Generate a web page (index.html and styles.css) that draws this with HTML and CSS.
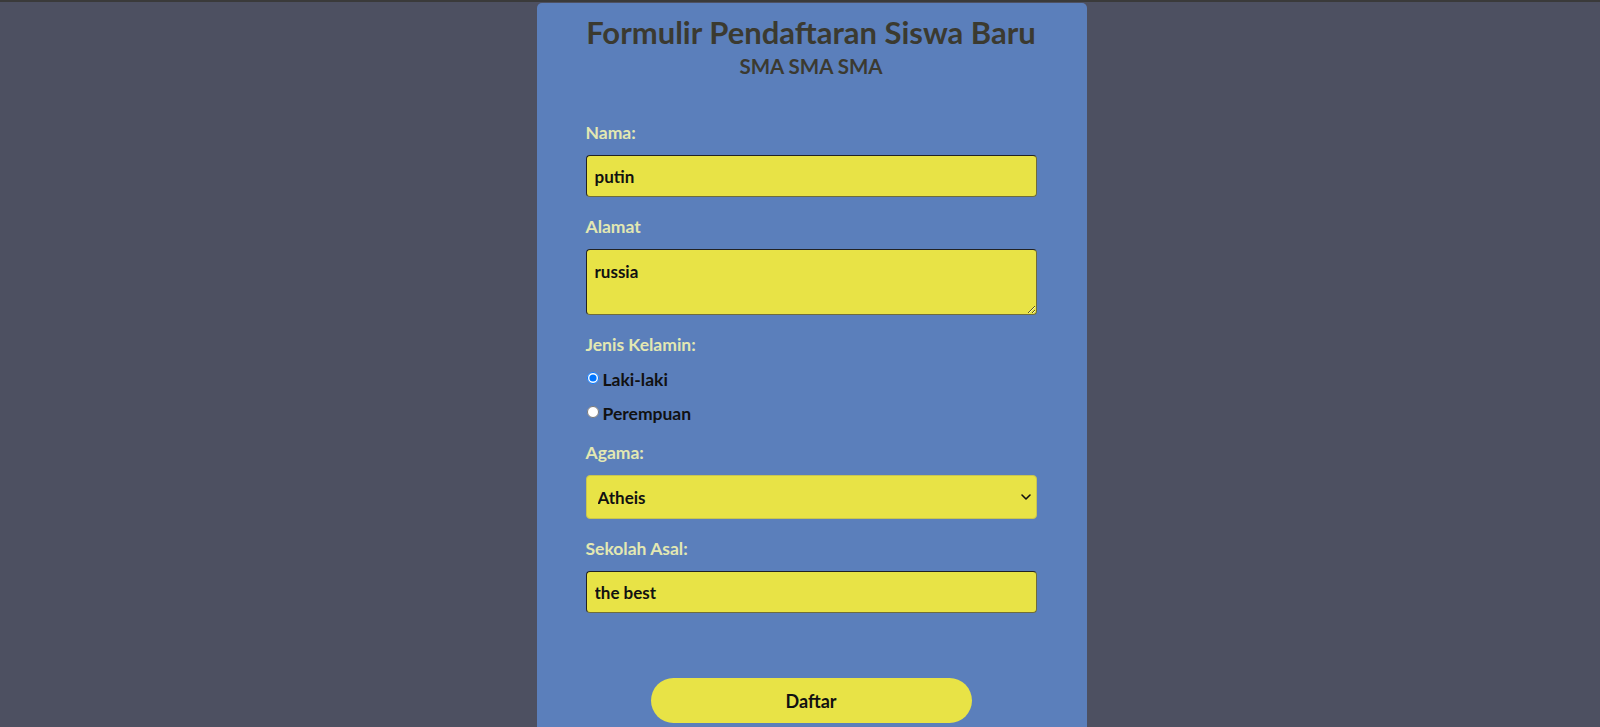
FILE: index.html
```html
<!DOCTYPE html>
<html lang="id">
<head>
    <meta charset="UTF-8">
    <title>Formulir Pendaftaran Siswa Baru</title>
    <meta name="viewport" content="width=device-width, initial-scale=1">
    <link rel="stylesheet" href="styles.css">
</head>
<body>
    <div class="container">
        <h1>Formulir Pendaftaran Siswa Baru</h1>
        <h2>SMA SMA SMA</h2>
        <form id="form">
            <div class="field">
                <label for="nama">Nama:</label>
                <input type="text" id="nama" value="putin">
            </div>

            <div class="field">
                <label for="alamat">Alamat</label>
                <textarea id="alamat">russia</textarea>
            </div>

            <div class="field">
                <label>Jenis Kelamin:</label>
                <div class="radio"><input type="radio" name="jk" id="laki" checked><span>Laki-laki</span></div>
                <div class="radio"><input type="radio" name="jk" id="perempuan"><span>Perempuan</span></div>
            </div>

            <div class="field">
                <label for="agama">Agama:</label>
                <div class="select-wrap">
                    <select id="agama">
                        <option>Atheis</option>
                    </select>
                    <svg width="12" height="8" viewBox="0 0 12 8" fill="none"><path d="M2 2l4 4 4-4" stroke="#111" stroke-width="1.6" stroke-linecap="round" stroke-linejoin="round"/></svg>
                </div>
            </div>

            <div class="field">
                <label for="sekolah">Sekolah Asal:</label>
                <input type="text" id="sekolah" value="the best">
            </div>

            <button type="submit">Daftar</button>
        </form>
    </div>
</body>
</html>
```

FILE: styles.css
```css
body {
    background: #4d5061;
    font-family: Lato, 'Open Sans', sans-serif;
    margin: 0;
    padding: 0 0 0 23px;
    border-top: 2px solid #3a3a3a;
    height: 725px;
    overflow: hidden;
}
.container {
    background: #5b7fbb;
    width: 451px;
    margin: 1px auto 0 auto;
    padding: 11px 50px 40px 49px;
    border-radius: 5px 5px 0 0;
    min-height: 800px;
}
h1 {
    margin: 0;
    text-align: center;
    font-size: 31px;
    line-height: 36px;
    font-weight: 700;
    color: #3b3a30;
}
h2 {
    margin: 4px 0 0 0;
    text-align: center;
    font-size: 20.5px;
    line-height: 24px;
    font-weight: 700;
    color: #3b3a30;
}
form {
    margin-top: 45px;
}
.field {
    margin-bottom: 20px;
}
label {
    display: block;
    color: #e3e8b2;
    font-size: 17.5px;
    line-height: 20px;
    font-weight: 700;
    margin-bottom: 12px;
}
input[type=text], textarea, select {
    display: block;
    width: 100%;
    box-sizing: border-box;
    background: #e8e346;
    border: 1px solid #222;
    border-right-color: #6f6d3a;
    border-bottom-color: #6f6d3a;
    border-radius: 4px;
    font-family: inherit;
    font-size: 17px;
    font-weight: 700;
    color: #111;
    padding: 0 8px;
    margin: 0;
}
input[type=text] {
    height: 42px;
}
textarea {
    height: 66px;
    padding-top: 11px;
    resize: vertical;
}
.radio {
    display: flex;
    align-items: center;
    gap: 4px;
    height: 20px;
    margin-top: 14px;
    font-size: 17.5px;
    font-weight: 700;
    color: #111;
}
.radio input {
    margin: -3px 0 0 1px;
    width: 12px;
    height: 12px;
}
.select-wrap {
    position: relative;
}
select {
    height: 44px;
    padding: 0 11px;
    border: 1px solid #c9c550;
    appearance: none;
}
.select-wrap svg {
    position: absolute;
    right: 5px;
    top: 18px;
}
button {
    display: block;
    margin: 65px auto 0 auto;
    width: 321px;
    height: 45px;
    background: #e8e346;
    border: none;
    border-radius: 23px;
    font-family: inherit;
    font-size: 18px;
    font-weight: 700;
    color: #111;
    cursor: pointer;
}
```
